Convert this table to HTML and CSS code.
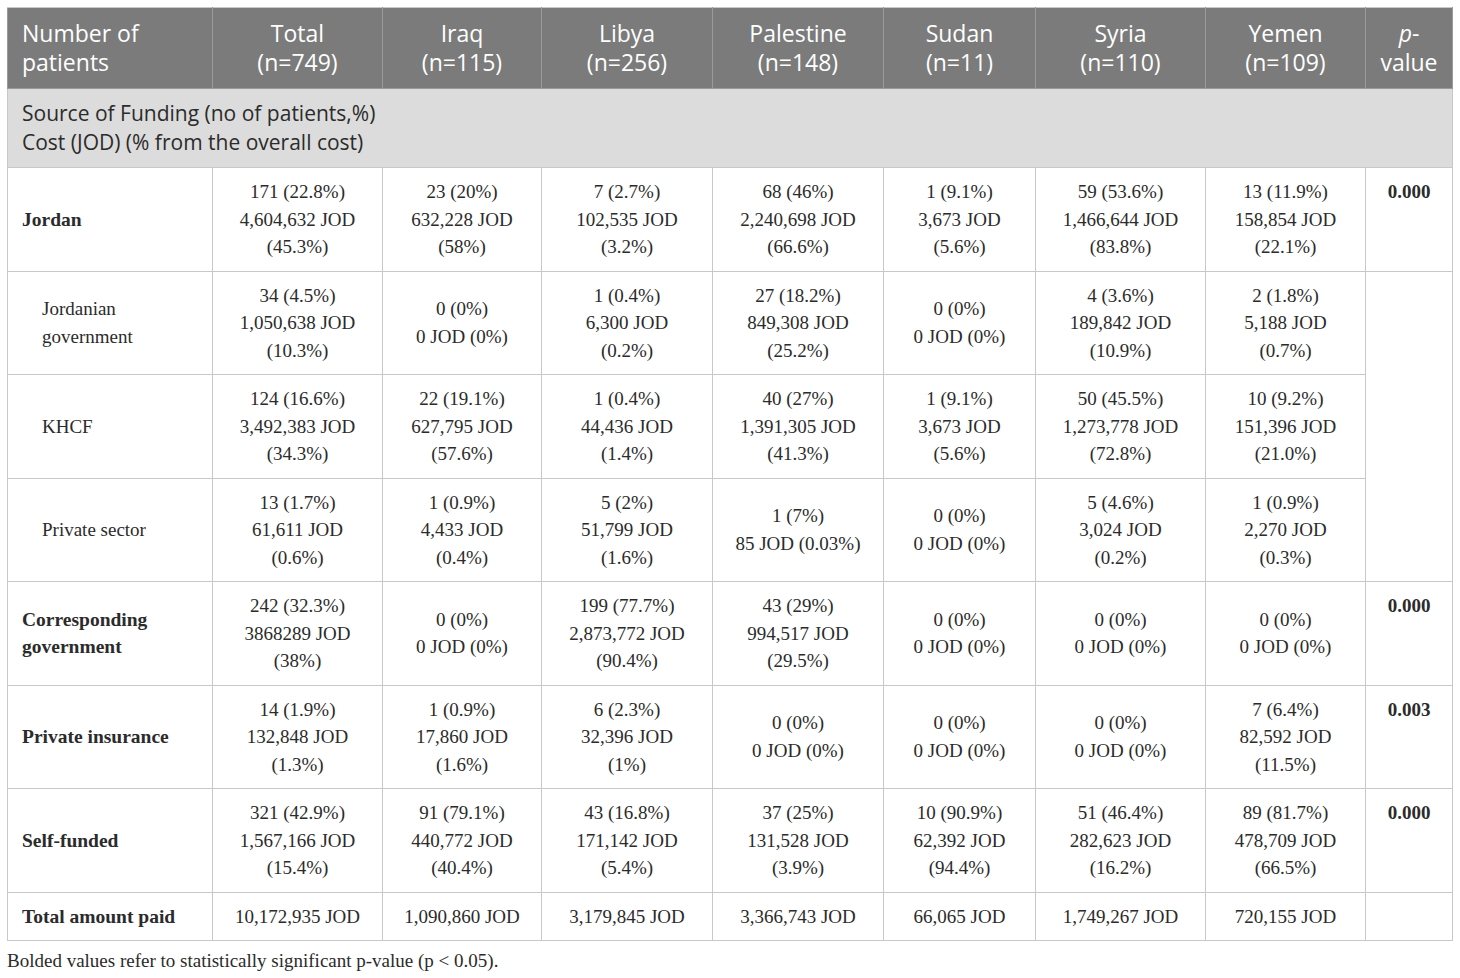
FILE: index.html
```html
<!DOCTYPE html>
<html lang="en">
<head>
    <meta charset="UTF-8">
    <meta name="viewport" content="width=device-width, initial-scale=1.0">
    <title>Source of Funding</title>
    <link rel="stylesheet" href="styles.css">
</head>
<body>

    <!-- Funding table -->
    <table class="funding-table">
        <colgroup>
            <col class="col-label">
            <col class="col-total">
            <col class="col-iraq">
            <col class="col-libya">
            <col class="col-palestine">
            <col class="col-sudan">
            <col class="col-syria">
            <col class="col-yemen">
            <col class="col-p">
        </colgroup>
        <thead>
            <tr>
                <th class="label">Number of<br>patients</th>
                <th>Total<br>(n=749)</th>
                <th>Iraq<br>(n=115)</th>
                <th>Libya<br>(n=256)</th>
                <th>Palestine<br>(n=148)</th>
                <th>Sudan<br>(n=11)</th>
                <th>Syria<br>(n=110)</th>
                <th>Yemen<br>(n=109)</th>
                <th><i>p</i>-<br>value</th>
            </tr>
        </thead>
        <tbody>
            <tr class="section">
                <td colspan="9">Source of Funding (no of patients,%)<br>Cost (JOD) (% from the overall cost)</td>
            </tr>
            <tr>
                <td class="label"><b>Jordan</b></td>
                <td>171 (22.8%)<br>4,604,632 JOD<br>(45.3%)</td>
                <td>23 (20%)<br>632,228 JOD<br>(58%)</td>
                <td>7 (2.7%)<br>102,535 JOD<br>(3.2%)</td>
                <td>68 (46%)<br>2,240,698 JOD<br>(66.6%)</td>
                <td>1 (9.1%)<br>3,673 JOD<br>(5.6%)</td>
                <td>59 (53.6%)<br>1,466,644 JOD<br>(83.8%)</td>
                <td>13 (11.9%)<br>158,854 JOD<br>(22.1%)</td>
                <td class="pval">0.000</td>
            </tr>
            <tr>
                <td class="label sub">Jordanian<br>government</td>
                <td>34 (4.5%)<br>1,050,638 JOD<br>(10.3%)</td>
                <td>0 (0%)<br>0 JOD (0%)</td>
                <td>1 (0.4%)<br>6,300 JOD<br>(0.2%)</td>
                <td>27 (18.2%)<br>849,308 JOD<br>(25.2%)</td>
                <td>0 (0%)<br>0 JOD (0%)</td>
                <td>4 (3.6%)<br>189,842 JOD<br>(10.9%)</td>
                <td>2 (1.8%)<br>5,188 JOD<br>(0.7%)</td>
                <td class="pval" rowspan="3"></td>
            </tr>
            <tr>
                <td class="label sub">KHCF</td>
                <td>124 (16.6%)<br>3,492,383 JOD<br>(34.3%)</td>
                <td>22 (19.1%)<br>627,795 JOD<br>(57.6%)</td>
                <td>1 (0.4%)<br>44,436 JOD<br>(1.4%)</td>
                <td>40 (27%)<br>1,391,305 JOD<br>(41.3%)</td>
                <td>1 (9.1%)<br>3,673 JOD<br>(5.6%)</td>
                <td>50 (45.5%)<br>1,273,778 JOD<br>(72.8%)</td>
                <td>10 (9.2%)<br>151,396 JOD<br>(21.0%)</td>
            </tr>
            <tr>
                <td class="label sub">Private sector</td>
                <td>13 (1.7%)<br>61,611 JOD<br>(0.6%)</td>
                <td>1 (0.9%)<br>4,433 JOD<br>(0.4%)</td>
                <td>5 (2%)<br>51,799 JOD<br>(1.6%)</td>
                <td>1 (7%)<br>85 JOD (0.03%)</td>
                <td>0 (0%)<br>0 JOD (0%)</td>
                <td>5 (4.6%)<br>3,024 JOD<br>(0.2%)</td>
                <td>1 (0.9%)<br>2,270 JOD<br>(0.3%)</td>
            </tr>
            <tr>
                <td class="label"><b>Corresponding<br>government</b></td>
                <td>242 (32.3%)<br>3868289 JOD<br>(38%)</td>
                <td>0 (0%)<br>0 JOD (0%)</td>
                <td>199 (77.7%)<br>2,873,772 JOD<br>(90.4%)</td>
                <td>43 (29%)<br>994,517 JOD<br>(29.5%)</td>
                <td>0 (0%)<br>0 JOD (0%)</td>
                <td>0 (0%)<br>0 JOD (0%)</td>
                <td>0 (0%)<br>0 JOD (0%)</td>
                <td class="pval">0.000</td>
            </tr>
            <tr>
                <td class="label"><b>Private insurance</b></td>
                <td>14 (1.9%)<br>132,848 JOD<br>(1.3%)</td>
                <td>1 (0.9%)<br>17,860 JOD<br>(1.6%)</td>
                <td>6 (2.3%)<br>32,396 JOD<br>(1%)</td>
                <td>0 (0%)<br>0 JOD (0%)</td>
                <td>0 (0%)<br>0 JOD (0%)</td>
                <td>0 (0%)<br>0 JOD (0%)</td>
                <td>7 (6.4%)<br>82,592 JOD<br>(11.5%)</td>
                <td class="pval">0.003</td>
            </tr>
            <tr>
                <td class="label"><b>Self-funded</b></td>
                <td>321 (42.9%)<br>1,567,166 JOD<br>(15.4%)</td>
                <td>91 (79.1%)<br>440,772 JOD<br>(40.4%)</td>
                <td>43 (16.8%)<br>171,142 JOD<br>(5.4%)</td>
                <td>37 (25%)<br>131,528 JOD<br>(3.9%)</td>
                <td>10 (90.9%)<br>62,392 JOD<br>(94.4%)</td>
                <td>51 (46.4%)<br>282,623 JOD<br>(16.2%)</td>
                <td>89 (81.7%)<br>478,709 JOD<br>(66.5%)</td>
                <td class="pval">0.000</td>
            </tr>
            <tr>
                <td class="label"><b>Total amount paid</b></td>
                <td>10,172,935 JOD</td>
                <td>1,090,860 JOD</td>
                <td>3,179,845 JOD</td>
                <td>3,366,743 JOD</td>
                <td>66,065 JOD</td>
                <td>1,749,267 JOD</td>
                <td>720,155 JOD</td>
                <td class="pval"></td>
            </tr>
        </tbody>
    </table>

    <!-- Footnote -->
    <p class="footnote">Bolded values refer to statistically significant p-value (p &lt; 0.05).</p>

</body>
</html>
```

FILE: styles.css
```css
body {
    margin: 7px;
    background-color: white;
    color: #2b2b2b;
    font-family: "Liberation Serif", "Times New Roman", serif;
}

.funding-table {
    border-collapse: collapse;
    table-layout: fixed;
    width: 1445px;
}

.col-label { width: 205px; }
.col-total { width: 170px; }
.col-iraq { width: 159px; }
.col-libya { width: 171px; }
.col-palestine { width: 171px; }
.col-sudan { width: 152px; }
.col-syria { width: 170px; }
.col-yemen { width: 160px; }
.col-p { width: 87px; }

/* Header row */
.funding-table th {
    background-color: #7b7b7b;
    color: white;
    font-family: "Open Sans", "Liberation Sans", sans-serif;
    font-weight: normal;
    font-size: 23px;
    line-height: 29px;
    padding: 11px 8px;
    text-align: center;
    border: 1px solid #9a9a9a;
    border-top-color: #c8c8c8;
}

.funding-table th.label {
    text-align: left;
    padding-left: 14px;
}

/* Body cells */
.funding-table td {
    font-size: 19px;
    line-height: 27.5px;
    padding: 10px 8px;
    text-align: center;
    vertical-align: middle;
    border: 1px solid #c8c8c8;
}

.funding-table td.label {
    text-align: left;
    padding-left: 14px;
}

.funding-table td.label b {
    font-size: 19.5px;
}

.funding-table td.sub {
    padding-left: 34px;
}

.funding-table td.pval {
    vertical-align: top;
    font-weight: bold;
}

.funding-table tr.section td {
    background-color: #dcdcdc;
    font-family: "Open Sans", "Liberation Sans", sans-serif;
    font-size: 21px;
    line-height: 29px;
    text-align: left;
    padding: 10px 14px;
}

.footnote {
    margin: 9px 0 0;
    font-size: 19px;
    line-height: 22px;
}
```
